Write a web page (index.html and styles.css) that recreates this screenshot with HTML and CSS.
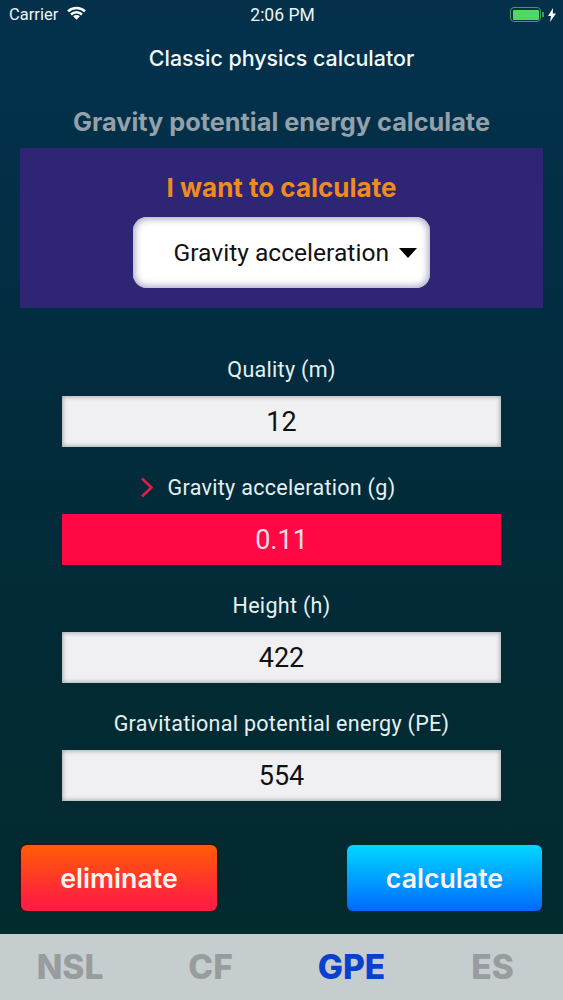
FILE: index.html
```html
<!DOCTYPE html>
<html lang="en">
<head>
<meta charset="utf-8">
<title>Classic physics calculator</title>
<link rel="stylesheet" href="styles.css">
</head>
<body>
<div class="app">
  <div class="status">
    <div class="status-left">
      <span>Carrier</span>
      <svg class="wifi" width="19" height="14" viewBox="0 0 18 13"><path d="M9 13 5.800 9.600a4.600 4.600 0 0 1 6.400 0Z" fill="#fff"/><path d="M1 5a11.500 11.500 0 0 1 16 0M3.800 7.900a7.400 7.400 0 0 1 10.400 0" fill="none" stroke="#fff" stroke-width="2.400"/></svg>
    </div>
    <div class="status-time">2:06 PM</div>
    <div class="status-right">
      <span class="battery"><span class="battery-fill"></span></span>
      <span class="battery-cap"></span>
      <svg width="8" height="14" viewBox="0 0 8 14"><path d="M5 0 0 8h3l-1 6 6-8.500H4.800Z" fill="#fff"/></svg>
    </div>
  </div>
  <h1 class="title">Classic physics calculator</h1>
  <h2 class="subtitle">Gravity potential energy calculate</h2>
  <section class="panel">
    <div class="panel-label">I want to calculate</div>
    <div class="select">
      <span>Gravity acceleration</span>
      <svg class="caret" width="18" height="10" viewBox="0 0 18 10"><path d="M0 0h18L9 10Z" fill="#000"/></svg>
    </div>
  </section>
  <section class="fields">
    <div class="field">
      <div class="label">Quality (m)</div>
      <div class="value">12</div>
    </div>
    <div class="field">
      <div class="label label-active">
        <svg class="chevron" width="14" height="21" viewBox="0 0 14 21"><path d="M2 1.500 11.500 10.500 2 19.500" fill="none" stroke="#e01c4c" stroke-width="2.600"/></svg>
        Gravity acceleration (g)
      </div>
      <div class="value value-active">0.11</div>
    </div>
    <div class="field">
      <div class="label">Height (h)</div>
      <div class="value">422</div>
    </div>
    <div class="field">
      <div class="label">Gravitational potential energy (PE)</div>
      <div class="value">554</div>
    </div>
  </section>
  <div class="actions">
    <div class="btn btn-clear">eliminate</div>
    <div class="btn btn-calc">calculate</div>
  </div>
  <nav class="tabs">
    <span class="tab">NSL</span>
    <span class="tab">CF</span>
    <span class="tab tab-active">GPE</span>
    <span class="tab">ES</span>
  </nav>
</div>
</body>
</html>
```
FILE: styles.css
```css
* { box-sizing: border-box; margin: 0; padding: 0; }
html, body { width: 563px; height: 1000px; overflow: hidden; }
body { font-family: Inter, "Liberation Sans", sans-serif; color: #fff; }
.app {
  width: 563px; height: 1000px; display: flex; flex-direction: column;
  background: linear-gradient(180deg, #04304a 0%, #03304a 10%, #022b3c 42%, #032a2b 100%);
}
.status {
  height: 30px; display: grid; grid-template-columns: 1fr auto 1fr; align-items: center;
  padding: 0 7px 0 9px; font-family: Roboto, sans-serif; font-size: 16.500px; color: #eef4f6;
}
.status-left { display: flex; align-items: center; gap: 9px; }
.wifi { margin-top: -3px; }
.status-time { font-size: 17.500px; }
.status-right { display: flex; justify-content: flex-end; align-items: center; }
.battery {
  width: 31px; height: 15px; border: 1.500px solid #3f9a63; border-radius: 4px; padding: 1.500px; display: block;
}
.battery-fill { display: block; height: 100%; background: #4cd964; border-radius: 1px; }
.battery-cap { width: 2px; height: 5px; background: #3f9a63; margin: 0 4px 0 1px; }
.title {
  margin-top: 14px; height: 29px; line-height: 29px; text-align: center;
  font-size: 21.400px; font-weight: 500; color: #f2f9fb;
}
.subtitle {
  margin-top: 35px; height: 28px; line-height: 28px; text-align: center;
  font-size: 25.300px; font-weight: 700; color: #94a1ab;
}
.panel {
  margin: 12px 20px 0; height: 161px; background: #2e2574;
  display: flex; flex-direction: column; align-items: center; padding-top: 26px;
}
.panel-label { height: 28px; line-height: 27px; font-size: 26px; font-weight: 700; color: #ef8b22; }
.select {
  margin-top: 15px; width: 297px; height: 71px; background: #fff; border-radius: 14px;
  box-shadow: inset 0 0 7px 2px #a9a7c4;
  display: flex; align-items: center; justify-content: flex-end; padding: 0 13px 2px 0; gap: 9px;
  font-size: 24.600px; color: #111; font-family: Roboto, sans-serif;
}
.select span { position: relative; top: 1px; margin-right: 1px; }
.caret { margin-top: 3px; }
.fields { margin-top: 48px; display: flex; flex-direction: column; gap: 27px; padding: 0 62px; }
.field { display: flex; flex-direction: column; gap: 12px; }
.label {
  height: 28px; line-height: 28px; text-align: center; font-family: Roboto, sans-serif;
  font-size: 21.500px; color: #e4f1f3; letter-spacing: .3px;
}
.label-active { position: relative; }
.chevron { position: absolute; left: 78px; top: 3px; }
.value {
  height: 51px; line-height: 52px; text-align: center; background: #f0f0f2;
  box-shadow: inset 0 0 4px 1px #a5a9ab; font-size: 27px; color: #111; font-family: Roboto, sans-serif;
}
.value-active { background: #ff0844; box-shadow: none; color: #f9dfe5; }
.actions { margin-top: 44px; display: flex; justify-content: space-between; padding: 0 21px; }
.btn {
  width: 196px; height: 66px; line-height: 66px; border-radius: 6px; text-align: center;
  font-size: 26.700px; font-weight: 600; color: #fdf3f0;
}
.btn-clear { background: linear-gradient(180deg, #ff5d05 0%, #ff1f40 85%); box-shadow: 0 0 0 1px #3a0d14; }
.btn-calc { width: 195px; background: linear-gradient(180deg, #00d8ff 0%, #0069ff 100%); }
.tabs {
  margin-top: 23px; height: 66px; background: #c5cdce; display: grid;
  grid-template-columns: 140px 141px 141px 141px; align-items: center; justify-items: center;
  font-size: 33.500px; font-weight: 800; color: #989c9e;
}
.tab-active { color: #0a40cf; }
```
